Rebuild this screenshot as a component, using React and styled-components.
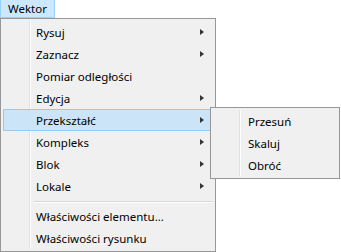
import React from 'react'
import styled, { createGlobalStyle } from 'styled-components'

const Global = createGlobalStyle`
  html, body {
    margin: 0;
    background: #ffffff;
    font-family: "Segoe UI", "Noto Sans", "Open Sans", sans-serif;
    font-size: 11.5px;
    color: #000;
  }
`

const Page = styled.div`
  width: 341px;
  height: 252px;
  overflow: hidden;
  display: flex;
  flex-direction: column;
  align-items: flex-start;
`

const MenuBar = styled.div`
  display: flex;
  height: 18px;
`

const BarItem = styled.div`
  box-sizing: border-box;
  height: 18px;
  padding: 0 7px;
  display: flex;
  align-items: center;
  background: ${(p) => (p.active ? '#cce8ff' : 'transparent')};
  border: 1px solid ${(p) => (p.active ? '#99d1ff' : 'transparent')};
  border-top: none;
`

// gutter line drawn as part of the menu background
const Menu = styled.div`
  box-sizing: border-box;
  width: ${(p) => p.width}px;
  background: linear-gradient(
      to right,
      transparent 28px,
      #e0e0e0 28px,
      #e0e0e0 29px,
      #ffffff 29px,
      #ffffff 30px,
      transparent 30px
    )
    no-repeat 0 2px / 100% calc(100% - 4px),
    #f0f0f0;
  border: 1px solid #979797;
  padding: 2px;
  display: flex;
  flex-direction: column;
`

const SubMenu = styled(Menu)`
  position: absolute;
  left: calc(100% - 2px);
  top: -3px;
  z-index: 2;
`

const Item = styled.div`
  position: relative;
  box-sizing: border-box;
  height: 22px;
  display: flex;
  align-items: center;
  padding-left: ${(p) => p.pad}px;
  border: 1px solid ${(p) => (p.active ? '#99c9ef' : 'transparent')};
  background: ${(p) => (p.active ? '#cce4f7' : 'transparent')};
`

const Label = styled.span`
  flex: 1;
  white-space: nowrap;
`

const Arrow = styled.span`
  width: 0;
  height: 0;
  border-top: 3.5px solid transparent;
  border-bottom: 3.5px solid transparent;
  border-left: 4px solid #333;
  margin-right: 8px;
`

const Separator = styled.div`
  height: 8px;
  display: flex;
  align-items: center;
  padding-left: 31px;
  &::after {
    content: '';
    flex: 1;
    height: 1px;
    background: #d7d7d7;
    box-shadow: 0 1px 0 #ffffff;
  }
`

const mainItems = [
  { label: 'Rysuj', sub: true },
  { label: 'Zaznacz', sub: true },
  { label: 'Pomiar odległości' },
  { label: 'Edycja', sub: true },
  { label: 'Przekształć', sub: true, active: true },
  { label: 'Kompleks', sub: true },
  { label: 'Blok', sub: true },
  { label: 'Lokale', sub: true },
  { sep: true },
  { label: 'Właściwości elementu...' },
  { label: 'Właściwości rysunku' },
]

const subItems = ['Przesuń', 'Skaluj', 'Obróć']

export default function App() {
  return (
    <Page>
      <Global />
      <MenuBar>
        <BarItem active>Wektor</BarItem>
      </MenuBar>
      <Menu width={216}>
        {mainItems.map((it, i) =>
          it.sep ? (
            <Separator key={i} />
          ) : (
            <Item key={i} active={it.active} pad={32}>
              <Label>{it.label}</Label>
              {it.sub && <Arrow />}
              {it.active && (
                <SubMenu width={130}>
                  {subItems.map((s) => (
                    <Item key={s} pad={34}>
                      <Label>{s}</Label>
                    </Item>
                  ))}
                </SubMenu>
              )}
            </Item>
          )
        )}
      </Menu>
    </Page>
  )
}
